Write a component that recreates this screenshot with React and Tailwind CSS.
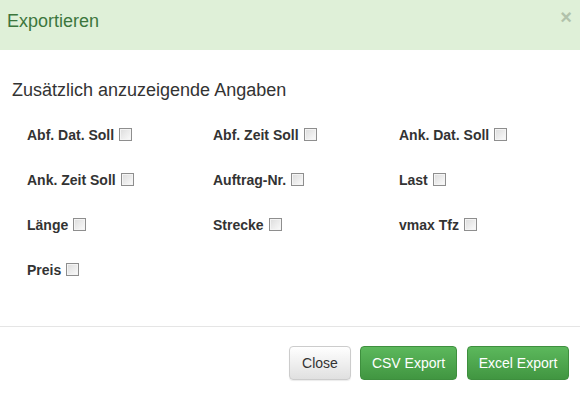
import React from "react";

const items = [
  "Abf. Dat. Soll",
  "Abf. Zeit Soll",
  "Ank. Dat. Soll",
  "Ank. Zeit Soll",
  "Auftrag-Nr.",
  "Last",
  "Länge",
  "Strecke",
  "vmax Tfz",
  "Preis",
];

function Box() {
  return (
    <span className="inline-block w-[13px] h-[13px] border border-[#8e8e8e] bg-gradient-to-br from-[#dcdcdc] to-[#fbfbfb] shadow-[inset_0_0_0_1px_#f4f4f4]" />
  );
}

export default function App() {
  return (
    <div
      className="w-[580px] h-[393px] bg-white overflow-hidden text-[#333]"
      style={{ fontFamily: '"Liberation Sans", Arial, sans-serif' }}
    >
      <div className="h-[50px] bg-[#dff0d8] flex items-center justify-between pl-[7px] pr-[8px]">
        <span className="text-[18px] leading-[20px] text-[#3c763d] -mt-[8px]">Exportieren</span>
        <span className="text-[20px] font-bold leading-[20px] text-[#b1c2ab] -mt-[17px]">×</span>
      </div>
      <div className="pt-[30px] pl-[12px]">
        <div className="text-[18px] leading-[20px] text-[#333]">Zusätzlich anzuzeigende Angaben</div>
      </div>
      <div className="mt-[12px] pl-[27px] grid grid-cols-[186px_186px_186px] auto-rows-[45px]">
        {items.map((t) => (
          <div key={t} className="flex items-center gap-[5px]">
            <span className="text-[14px] font-bold leading-[20px] text-[#333]">{t}</span>
            <Box />
          </div>
        ))}
      </div>
      <div className="mt-[34px] border-t border-[#e5e5e5] pt-[19px] pr-[11px] flex justify-end gap-[9px]">
        <button className="h-[34px] w-[62px] rounded-[4px] border border-[#cccccc] bg-gradient-to-b from-white to-[#e0e0e0] text-[14px] text-[#333] shadow-[0_1px_1px_rgba(0,0,0,0.08)]">
          Close
        </button>
        <button className="h-[34px] w-[97px] rounded-[4px] border border-[#3e8f3e] bg-gradient-to-b from-[#5cb85c] to-[#419641] text-[14px] text-white">
          CSV Export
        </button>
        <button className="h-[34px] w-[102px] ml-[1px] rounded-[4px] border border-[#3e8f3e] bg-gradient-to-b from-[#5cb85c] to-[#419641] text-[14px] text-white">
          Excel Export
        </button>
      </div>
    </div>
  );
}
